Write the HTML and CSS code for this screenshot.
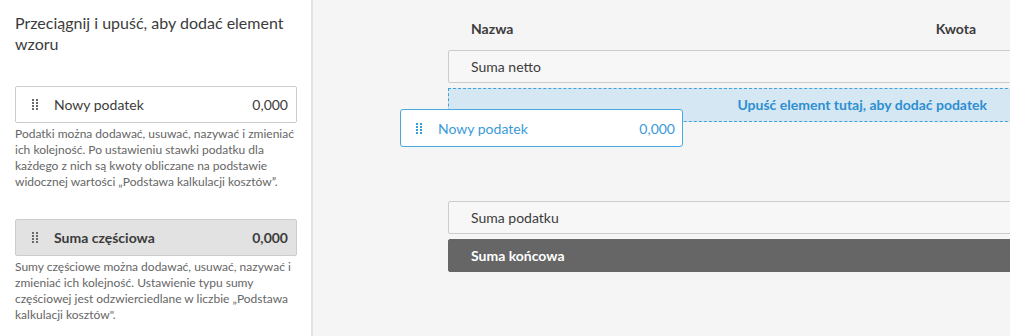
FILE: index.html
```html
<!DOCTYPE html>
<html lang="pl">
<head>
<meta charset="UTF-8">
<meta name="viewport" content="width=device-width, initial-scale=1.0">
<title>Szablon podatków</title>
<link rel="stylesheet" href="styles.css">
</head>
<body>
<div class="layout">
  <aside class="palette">
    <h2 class="palette-title">Przeciągnij i upuść, aby dodać element wzoru</h2>

    <div class="item">
      <svg class="grip" width="6" height="11" viewBox="0 0 6 11"><g fill="currentColor"><rect x="0" y="0" width="2" height="2"/><rect x="4" y="0" width="2" height="2"/><rect x="0" y="3" width="2" height="2"/><rect x="4" y="3" width="2" height="2"/><rect x="0" y="6" width="2" height="2"/><rect x="4" y="6" width="2" height="2"/><rect x="0" y="9" width="2" height="2"/><rect x="4" y="9" width="2" height="2"/></g></svg>
      <span class="item-name">Nowy podatek</span>
      <span class="item-value">0,000</span>
    </div>
    <p class="hint">Podatki można dodawać, usuwać, nazywać i zmieniać ich kolejność. Po ustawieniu stawki podatku dla każdego z nich są kwoty obliczane na podstawie widocznej wartości „Podstawa kalkulacji kosztów”.</p>

    <div class="item item-subtotal">
      <svg class="grip" width="6" height="11" viewBox="0 0 6 11"><g fill="currentColor"><rect x="0" y="0" width="2" height="2"/><rect x="4" y="0" width="2" height="2"/><rect x="0" y="3" width="2" height="2"/><rect x="4" y="3" width="2" height="2"/><rect x="0" y="6" width="2" height="2"/><rect x="4" y="6" width="2" height="2"/><rect x="0" y="9" width="2" height="2"/><rect x="4" y="9" width="2" height="2"/></g></svg>
      <span class="item-name">Suma częściowa</span>
      <span class="item-value">0,000</span>
    </div>
    <p class="hint">Sumy częściowe można dodawać, usuwać, nazywać i zmieniać ich kolejność. Ustawienie typu sumy częściowej jest odzwierciedlane w liczbie „Podstawa kalkulacji kosztów".</p>
  </aside>

  <main class="template">
    <div class="table">
      <div class="table-head">
        <span>Nazwa</span>
        <span>Kwota</span>
      </div>
      <div class="row">Suma netto</div>
      <div class="dropzone">Upuść element tutaj, aby dodać podatek</div>
      <div class="spacer"></div>
      <div class="row">Suma podatku</div>
      <div class="row row-total">Suma końcowa</div>
    </div>

    <div class="item item-dragging">
      <svg class="grip" width="6" height="11" viewBox="0 0 6 11"><g fill="currentColor"><rect x="0" y="0" width="2" height="2"/><rect x="4" y="0" width="2" height="2"/><rect x="0" y="3" width="2" height="2"/><rect x="4" y="3" width="2" height="2"/><rect x="0" y="6" width="2" height="2"/><rect x="4" y="6" width="2" height="2"/><rect x="0" y="9" width="2" height="2"/><rect x="4" y="9" width="2" height="2"/></g></svg>
      <span class="item-name">Nowy podatek</span>
      <span class="item-value">0,000</span>
    </div>
  </main>
</div>
</body>
</html>
```

FILE: styles.css
```css
body {
  margin: 0;
  font-family: Lato, "Noto Sans", sans-serif;
  color: #3c3c3c;
  background-color: #f5f5f5;
}

.layout {
  display: flex;
  height: 336px;
  overflow: hidden;
}

/* Left palette */
.palette {
  width: 282px;
  flex-shrink: 0;
  padding: 12px 14px 0 15px;
  background-color: #fff;
  border-right: 2px solid #e3e3e3;
}

.palette-title {
  margin: 0 0 32px;
  font-size: 16px;
  font-weight: normal;
  line-height: 21px;
  color: #3c3c3c;
}

.item {
  display: flex;
  align-items: center;
  height: 35px;
  padding: 0 8px 0 16px;
  border: 1px solid #cccccc;
  border-radius: 2px;
  background-color: #fff;
  font-size: 14px;
  color: #3c3c3c;
}

.item-name {
  flex: 1;
  margin-left: 16px;
}

.grip {
  flex-shrink: 0;
  color: #6a6a6a;
}

.item-subtotal {
  background-color: #e2e2e2;
  font-weight: bold;
}

.hint {
  margin: 3px 0 29px;
  font-size: 12px;
  line-height: 16px;
  color: #666;
}

/* Right template */
.template {
  position: relative;
  flex: 1;
  padding: 20px 0 0 135px;
}

.table {
  width: 600px;
}

.table-head {
  display: flex;
  justify-content: space-between;
  padding: 0 72px 0 23px;
  height: 20px;
  margin-bottom: 10px;
  font-size: 14px;
  font-weight: bold;
}

.row {
  height: 31px;
  line-height: 31px;
  padding-left: 22px;
  margin-bottom: 5px;
  border: 1px solid #cccccc;
  border-radius: 2px;
  background-color: #f7f7f7;
  font-size: 14px;
}

.row-total {
  background-color: #666;
  border-color: #666;
  color: #fff;
  font-weight: bold;
}

.dropzone {
  height: 32px;
  line-height: 32px;
  padding-right: 60px;
  border: 1px dashed #3ea2dc;
  background-color: #d4e7f3;
  color: #2d8fd0;
  font-size: 14px;
  font-weight: bold;
  text-align: right;
}

.spacer {
  height: 79px;
}

.item-dragging {
  position: absolute;
  left: 87px;
  top: 109px;
  width: 259px;
  height: 36px;
  padding-left: 15px;
  padding-right: 7px;
  border-color: #4aa8e0;
  border-radius: 3px;
  color: #3a9ad8;
}

.item-dragging .grip {
  color: #3a9ad8;
}
```
